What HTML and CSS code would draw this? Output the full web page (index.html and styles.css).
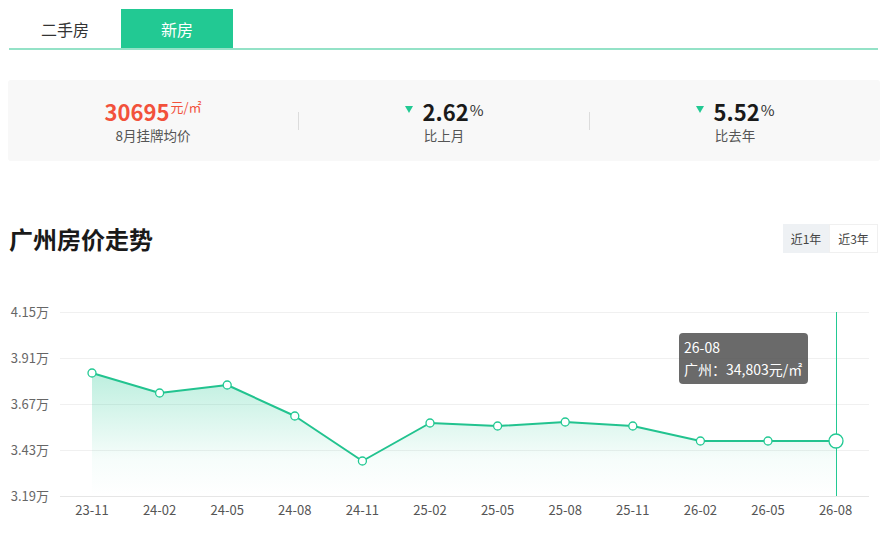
FILE: index.html
```html
<!DOCTYPE html>
<html lang="zh-CN">
<head>
<meta charset="utf-8">
<title>广州房价走势</title>
<link rel="stylesheet" href="styles.css">
</head>
<body>
<div class="page">
  <div class="tabs">
    <div class="tab">二手房</div>
    <div class="tab active">新房</div>
  </div>

  <div class="stats">
    <div class="stat">
      <div class="value"><span class="num red">30695</span><span class="unit red">元/㎡</span></div>
      <div class="label">8月挂牌均价</div>
    </div>
    <div class="sep"></div>
    <div class="stat">
      <div class="value"><span class="down"></span><span class="num">2.62</span><span class="pct">%</span></div>
      <div class="label">比上月</div>
    </div>
    <div class="sep"></div>
    <div class="stat">
      <div class="value"><span class="down"></span><span class="num">5.52</span><span class="pct">%</span></div>
      <div class="label">比去年</div>
    </div>
  </div>

  <div class="title-row">
    <h2 class="title">广州房价走势</h2>
    <div class="switch">
      <span class="btn on">近1年</span>
      <span class="btn">近3年</span>
    </div>
  </div>
</div>

<div class="chart">
  <svg class="chart-svg" width="892" height="247" viewBox="0 0 892 247" xmlns="http://www.w3.org/2000/svg">
    <defs>
      <linearGradient id="area" x1="0" y1="0" x2="0" y2="1">
        <stop offset="0" stop-color="#22c993" stop-opacity="0.3"/>
        <stop offset="0.7" stop-color="#22c993" stop-opacity="0.04"/>
        <stop offset="1" stop-color="#22c993" stop-opacity="0"/>
      </linearGradient>
    </defs>
    <g class="grid">
      <line x1="60" y1="17.5" x2="869" y2="17.5"/>
      <line x1="60" y1="63.5" x2="869" y2="63.5"/>
      <line x1="60" y1="109.5" x2="869" y2="109.5"/>
      <line x1="60" y1="155.5" x2="869" y2="155.5"/>
      <line x1="60" y1="201.5" x2="869" y2="201.5" class="axis"/>
    </g>
    <g class="ylab">
      <text x="49" y="21.5">4.15万</text>
      <text x="49" y="67.5">3.91万</text>
      <text x="49" y="113.5">3.67万</text>
      <text x="49" y="159.5">3.43万</text>
      <text x="49" y="205.5">3.19万</text>
    </g>
    <g class="xlab">
      <text x="92" y="220">23-11</text>
      <text x="159.6" y="220">24-02</text>
      <text x="227.2" y="220">24-05</text>
      <text x="294.8" y="220">24-08</text>
      <text x="362.4" y="220">24-11</text>
      <text x="430" y="220">25-02</text>
      <text x="497.6" y="220">25-05</text>
      <text x="565.2" y="220">25-08</text>
      <text x="632.8" y="220">25-11</text>
      <text x="700.4" y="220">26-02</text>
      <text x="768" y="220">26-05</text>
      <text x="835.6" y="220">26-08</text>
    </g>
    <polygon class="area" points="92,78 159.6,98 227.2,90 294.8,121 362.4,166 430,128 497.6,131 565.2,127 632.8,131 700.4,146 768,146 836,146 836,201 92,201"/>
    <line class="cursor" x1="836.5" y1="17" x2="836.5" y2="201"/>
    <polyline class="line" points="92,78 159.6,98 227.2,90 294.8,121 362.4,166 430,128 497.6,131 565.2,127 632.8,131 700.4,146 768,146 836,146"/>
    <g class="dots">
      <circle cx="92" cy="78" r="4"/>
      <circle cx="159.6" cy="98" r="4"/>
      <circle cx="227.2" cy="90" r="4"/>
      <circle cx="294.8" cy="121" r="4"/>
      <circle cx="362.4" cy="166" r="4"/>
      <circle cx="430" cy="128" r="4"/>
      <circle cx="497.6" cy="131" r="4"/>
      <circle cx="565.2" cy="127" r="4"/>
      <circle cx="632.8" cy="131" r="4"/>
      <circle cx="700.4" cy="146" r="4"/>
      <circle cx="768" cy="146" r="4"/>
      <circle cx="836" cy="146" r="7"/>
    </g>
  </svg>
  <div class="tooltip">
    <div>26-08</div>
    <div>广州：34,803元/㎡</div>
  </div>
</div>
</body>
</html>
```

FILE: styles.css
```css
* { box-sizing: border-box; }
html, body { margin: 0; padding: 0; background: #fff; }
body {
  font-family: "Noto Sans CJK SC", "Noto Sans", sans-serif;
  color: #333;
}
.page {
  margin-left: 9px;
  width: 869px;
  padding-top: 9px;
}
.tabs {
  display: flex;
  height: 41px;
  border-bottom: 2px solid #94e2c7;
}
.tab {
  width: 112px;
  height: 39px;
  display: flex;
  align-items: center;
  justify-content: center;
  font-size: 16px;
  color: #333;
}
.tab.active {
  background: #22c993;
  color: #fff;
}
.stats {
  margin: 30px -2px 0 -1px;
  height: 81px;
  background: #f8f8f8;
  border-radius: 3px;
  display: flex;
  align-items: center;
}
.stat {
  flex: 1;
  display: flex;
  flex-direction: column;
  align-items: center;
}
.sep {
  width: 1px;
  height: 18px;
  background: #dcdcdc;
}
.value {
  display: flex;
  align-items: center;
  height: 26px;
  line-height: 26px;
}
.num {
  font-size: 22px;
  font-weight: 700;
  color: #1a1a1a;
}
.num.red, .unit.red { color: #f2513b; }
.unit {
  font-size: 13px;
  align-self: flex-start;
  line-height: 18px;
  margin-left: 1px;
}
.pct {
  font-size: 15px;
  color: #333;
  margin-left: 1px;
  line-height: 18px;
  margin-top: -2px;
}
.down {
  width: 0;
  height: 0;
  border-left: 4.5px solid transparent;
  border-right: 4.5px solid transparent;
  border-top: 7px solid #22c993;
  margin-right: 10px;
  align-self: flex-start;
  margin-top: 8px;
}
.label {
  font-size: 13.5px;
  color: #555;
  line-height: 18px;
  margin-top: 2px;
}
.title-row {
  margin-top: 63px;
  display: flex;
  align-items: center;
  justify-content: space-between;
  height: 29px;
}
.title {
  margin: 0;
  font-size: 24px;
  font-weight: 600;
  color: #1a1a1a;
  line-height: 28px;
}
.switch { display: flex; }
.btn {
  font-size: 12px;
  color: #444;
  height: 29px;
  line-height: 27px;
  width: 49px;
  text-align: center;
  border: 1px solid #f0f0f0;
  background: #fff;
}
.btn.on {
  width: 46px;
  background: #eef1f4;
  border-color: #eef1f4;
}
.chart {
  position: relative;
  margin-top: 42px;
  width: 892px;
  height: 247px;
}
.chart-svg { display: block; }
.grid line { stroke: #f0f0f0; stroke-width: 1; }
.grid line.axis { stroke: #e6e6e6; }
.ylab text {
  font-size: 13px;
  fill: #666;
  text-anchor: end;
  font-family: "Noto Sans CJK SC", sans-serif;
}
.xlab text {
  font-size: 13px;
  fill: #555;
  text-anchor: middle;
  font-family: "Noto Sans CJK SC", sans-serif;
}
.area { fill: url(#area); }
.line {
  fill: none;
  stroke: #22c38f;
  stroke-width: 2;
  stroke-linejoin: round;
}
.cursor { stroke: #22c993; stroke-width: 1; }
.dots circle {
  fill: #fff;
  stroke: #22c993;
  stroke-width: 1.3;
}
.tooltip {
  position: absolute;
  left: 679px;
  top: 38px;
  width: 129px;
  height: 51px;
  padding: 3px 5px;
  border-radius: 4px;
  background: rgba(80, 80, 80, 0.85);
  color: #fff;
  font-size: 14px;
  line-height: 22px;
  white-space: nowrap;
}
```
